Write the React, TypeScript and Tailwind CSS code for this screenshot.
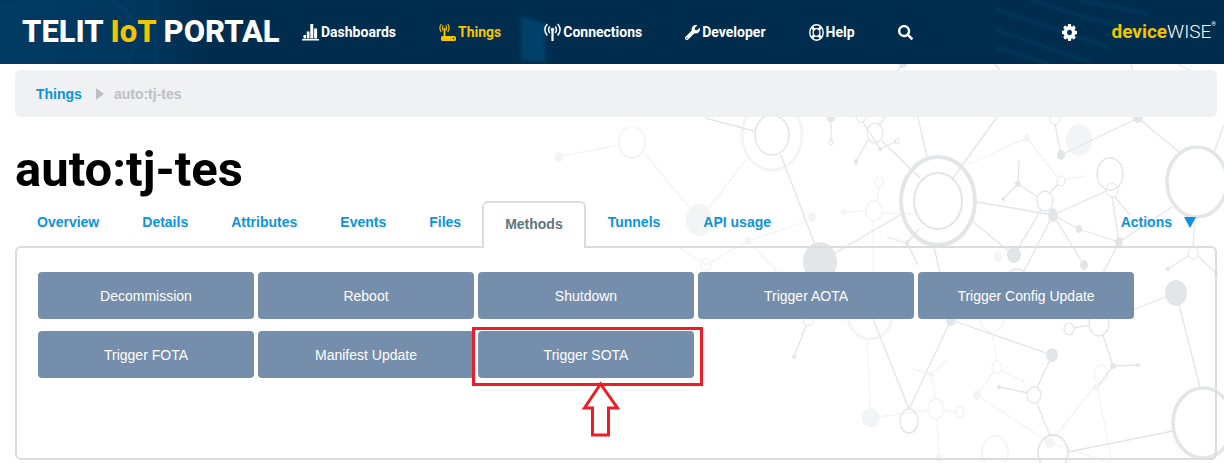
import { FaSearch, FaWrench } from "react-icons/fa";

const INK = "#e3e6e9";
const FAINT = "#f3f4f6";

type Line = [number, number, number, number];
type Node = [number, number, number, number];
type Ring = [number, number, number, number, number];

const faintLines: Line[] = [
  [563, 156, 618, 145], [644, 153, 690, 208], [747, 158, 709, 208], [706, 265, 680, 248],
  [706, 265, 748, 241], [748, 241, 810, 220], [748, 241, 777, 272], [967, 165, 1027, 138],
  [1027, 138, 1057, 177], [1065, 179, 1087, 176], [844, 212, 866, 211], [882, 213, 915, 214],
  [877, 201, 879, 186], [873, 221, 873, 273], [992, 334, 997, 362], [1001, 370, 1023, 381],
  [994, 371, 977, 395], [977, 395, 1050, 443], [867, 340, 871, 418], [871, 418, 928, 410],
  [944, 410, 956, 412], [936, 399, 931, 374], [931, 374, 912, 369], [931, 374, 947, 360],
  [937, 419, 939, 458], [1097, 383, 1055, 437], [1098, 390, 1112, 463], [1050, 443, 1110, 463],
];
const lines: Line[] = [
  [831, 118, 831, 142], [868, 140, 856, 162], [863, 122, 880, 149], [880, 149, 897, 141],
  [882, 141, 920, 178], [879, 125, 888, 113], [917, 113, 927, 157], [1000, 113, 953, 178],
  [1019, 160, 1018, 184], [1018, 184, 1003, 199], [1018, 184, 1038, 197], [1050, 193, 1058, 184],
  [977, 202, 1053, 215], [1053, 215, 1106, 191], [1053, 215, 1079, 229], [1079, 229, 1119, 242],
  [1112, 196, 1119, 242], [1114, 196, 1130, 215], [1053, 215, 1084, 265], [1053, 215, 1023, 273],
  [1041, 210, 1014, 255], [973, 222, 1014, 255], [1119, 242, 1172, 207], [1119, 242, 1103, 273],
  [1179, 152, 1138, 118], [1138, 118, 1061, 155], [1061, 155, 1055, 124], [1214, 152, 1224, 125],
  [1195, 218, 1193, 247], [1188, 256, 1168, 269], [1198, 256, 1216, 273], [820, 262, 900, 215],
  [781, 155, 815, 245], [705, 118, 754, 131], [907, 243, 887, 237], [907, 243, 917, 263],
  [907, 243, 919, 229], [934, 247, 940, 273], [873, 319, 909, 409], [951, 320, 909, 409],
  [951, 320, 1052, 355], [1052, 355, 1037, 388], [1028, 393, 999, 387], [1037, 403, 1050, 436],
  [1068, 452, 1173, 431], [1176, 293, 1200, 387], [1176, 293, 1109, 319], [1089, 325, 1074, 328],
  [1103, 335, 1113, 366], [1113, 366, 1138, 365], [1113, 366, 1098, 386], [806, 326, 794, 357],
  [898, 70, 903, 64], [995, 64, 1000, 71], [1131, 62, 1132, 71], [1178, 64, 1190, 71],
];
const faintDots: Node[] = [
  [559, 157, 4, 5], [699, 220, 13, 16], [748, 241, 3, 4], [1027, 138, 3, 4], [1079, 140, 13, 16],
  [844, 212, 3, 3], [998, 257, 4, 5], [977, 395, 4, 5], [1050, 443, 5, 5], [871, 418, 9, 10],
  [931, 374, 3, 3], [939, 458, 3, 4], [1023, 381, 2, 2], [812, 217, 4, 5],
];
const dots: Node[] = [
  [831, 118, 4, 4], [856, 162, 2, 3], [880, 149, 2, 2], [1018, 184, 3, 3], [1003, 199, 2, 2],
  [1053, 215, 5, 7], [1079, 229, 3, 4], [1119, 242, 4, 5], [1084, 265, 4, 5], [1014, 255, 7, 8],
  [1138, 118, 5, 5], [1061, 155, 4, 5], [1168, 269, 2, 2], [1216, 273, 2, 2], [1176, 293, 11, 13],
  [820, 262, 17, 20], [907, 243, 2, 3], [917, 263, 1, 2], [951, 320, 5, 6], [1052, 355, 6, 7],
  [999, 387, 2, 2], [1113, 366, 3, 3], [1138, 365, 2, 2], [794, 357, 2, 2], [903, 65, 4, 3],
];
const faintRings: Ring[] = [
  [632, 142, 13, 16, 1.5], [772, 135, 30, 35, 3], [706, 265, 5, 6, 1.5], [874, 211, 8, 10, 1.5],
  [879, 182, 4, 5, 1.5], [992, 319, 12, 13, 1.5], [997, 367, 5, 6, 1.5], [936, 409, 8, 10, 1.5],
  [960, 412, 4, 5, 1.5], [995, 452, 13, 16, 1.5], [1101, 374, 7, 9, 1.5], [870, 315, 22, 24, 3],
];
const rings: Ring[] = [
  [772, 135, 17, 20, 1.5], [831, 142, 2, 3, 1], [861, 117, 5, 5, 1], [875, 133, 8, 10, 1.2],
  [897, 141, 2, 3, 1], [938, 201, 37, 44, 4], [938, 201, 24, 28, 2], [1045, 201, 8, 10, 1.3],
  [1061, 181, 4, 5, 1], [1110, 174, 13, 16, 1.5], [1112, 190, 6, 7, 1], [1197, 182, 30, 35, 3.5],
  [1055, 119, 5, 6, 1], [1193, 253, 5, 6, 1], [1017, 282, 11, 13, 1.5], [909, 421, 9, 12, 1.3],
  [1034, 395, 7, 8, 1.3], [1053, 453, 15, 18, 1.8], [1203, 423, 30, 35, 3.5], [1099, 323, 10, 13, 1.3],
  [1069, 329, 5, 6, 1.2], [1096, 388, 2, 2, 1], [808, 321, 5, 5, 1],
];

function Network() {
  const drawLines = (items: Line[], color: string) =>
    items.map(([x1, y1, x2, y2], i) => (
      <line key={i} x1={x1} y1={y1} x2={x2} y2={y2} stroke={color} strokeWidth="1.3" />
    ));
  const drawDots = (items: Node[], color: string) =>
    items.map(([cx, cy, rx, ry], i) => <ellipse key={i} cx={cx} cy={cy} rx={rx} ry={ry} fill={color} />);
  const drawRings = (items: Ring[], color: string) =>
    items.map(([cx, cy, rx, ry, w], i) => (
      <ellipse key={i} cx={cx} cy={cy} rx={rx} ry={ry} fill="none" stroke={color} strokeWidth={w} />
    ));
  return (
    <svg
      aria-hidden="true"
      className="pointer-events-none absolute top-0 right-0 -z-10"
      width="684"
      height="463"
      viewBox="540 0 684 463"
    >
      {drawLines(faintLines, FAINT)}
      {drawRings(faintRings, FAINT)}
      {drawDots(faintDots, FAINT)}
      {drawLines(lines, INK)}
      {drawRings(rings, INK)}
      {drawDots(dots, INK)}
    </svg>
  );
}

function HeaderTexture() {
  return (
    <svg
      aria-hidden="true"
      className="pointer-events-none absolute inset-0 -z-10 h-full w-full"
      viewBox="0 0 1224 64"
      preserveAspectRatio="none"
    >
      <defs>
        <linearGradient id="bar" x1="0" x2="1" y1="0" y2="0">
          <stop offset="0" stopColor="#003a63" />
          <stop offset="0.12" stopColor="#00365c" />
          <stop offset="0.17" stopColor="#002d4e" />
          <stop offset="1" stopColor="#002d4d" />
        </linearGradient>
        <filter id="soft">
          <feGaussianBlur stdDeviation="1.5" />
        </filter>
      </defs>
      <rect width="1224" height="64" fill="url(#bar)" />
      <g filter="url(#soft)">
        <path d="M521 16 L545 23 L545 63 L521 60Z" fill="#003f69" />
        <path d="M0 10 Q10 2 22 8 M110 0 Q150 20 128 62 M156 0V64" stroke="#00406a" strokeWidth="2" fill="none" />
        <path d="M995 9L1110 48M995 29L1090 62M995 47L1050 64M1030 0L1148 36M1080 0L1148 14" stroke="#003a61" strokeWidth="2.5" />
        <path d="M640 5L780 35M620 20L760 55" stroke="#002a46" strokeWidth="3" strokeDasharray="3 3" />
      </g>
    </svg>
  );
}

function BarsIcon() {
  return (
    <svg aria-hidden="true" width="17" height="18" viewBox="0 0 17 18" fill="currentColor">
      <path d="M0 16h17v1.500H0zM1.500 12h2.500v3.500H1.500zM4.800 8.500h2.700v7H4.800zM8.300 1h3v14.500h-3zM12.100 5.500h3v10h-3z" />
    </svg>
  );
}

function RouterIcon() {
  return (
    <svg aria-hidden="true" width="17" height="19" viewBox="0 0 17 19" fill="none" stroke="currentColor">
      <path d="M2.300 1Q-.5 5 2.300 9M4.300 2.500Q2.800 5 4.300 7.500M8.700 1Q11.500 5 8.700 9M6.700 2.500Q8.200 5 6.700 7.500" strokeWidth="1.200" />
      <path d="M5.500 5V14" strokeWidth="1.800" />
      <rect x="2" y="13" width="15" height="5" rx="1.500" fill="currentColor" stroke="none" />
      <circle cx="14.500" cy="15.500" r=".8" fill="#002d4e" stroke="none" />
    </svg>
  );
}

function AntennaIcon() {
  return (
    <svg aria-hidden="true" width="17" height="19" viewBox="0 0 17 19" fill="none" stroke="currentColor">
      <path d="M3.300 1Q-1.500 6.500 3.300 12.500M5.800 3.500Q3.300 6.500 5.800 10M13.700 1Q18.500 6.500 13.700 12.500M11.200 3.500Q13.700 6.500 11.200 10" strokeWidth="1.500" />
      <path d="M8.500 6V18" strokeWidth="2.200" />
      <circle cx="8.500" cy="6.500" r="1.800" fill="currentColor" stroke="none" />
    </svg>
  );
}

function LifeRingIcon() {
  return (
    <svg aria-hidden="true" width="15" height="17" viewBox="0 0 15 17" fill="none" stroke="currentColor">
      <ellipse cx="7.500" cy="8.500" rx="6.700" ry="7.700" strokeWidth="1.400" />
      <ellipse cx="7.500" cy="8.500" rx="3.400" ry="3.900" strokeWidth="1.300" />
      <path d="M3 3.200L5.500 6M12 3.200L9.500 6M3 13.800L5.500 11M12 13.800L9.500 11" strokeWidth="2.800" />
    </svg>
  );
}

function CogIcon() {
  return (
    <svg aria-hidden="true" width="15" height="17" viewBox="0 0 1536 1536" preserveAspectRatio="none" fill="currentColor">
      <path d="M1024 768q0-106-75-181t-181-75-181 75-75 181 75 181 181 75 181-75 75-181zm512-109v222q0 12-8 23t-20 13l-185 28q-19 54-39 91 35 50 107 138 10 12 10 25t-9 23q-27 37-99 108t-94 71q-12 0-26-9l-138-108q-44 23-91 38-16 136-29 186-7 28-36 28h-222q-14 0-24.500-8.500t-11.500-21.500l-28-184q-49-16-90-37l-141 107q-10 9-25 9-14 0-25-11-126-114-165-168-7-10-7-23 0-12 8-23 15-21 51-66.500t54-70.500q-27-50-41-99l-183-27q-13-2-21-12.500t-8-23.500v-222q0-12 8-23t19-13l186-28q14-46 39-92-40-57-107-138-10-12-10-24 0-10 9-23 26-36 98.500-107.500t94.500-71.500q13 0 26 10l138 107q44-23 91-38 16-136 29-186 7-28 36-28h222q14 0 24.500 8.500t11.500 21.500l28 184q49 16 90 37l142-107q9-9 24-9 13 0 25 10 129 119 165 170 7 8 7 22 0 12-8 23-15 21-51 66.500t-54 70.500q26 50 41 98l183 28q13 2 21 12.500t8 23.500z" />
    </svg>
  );
}

const tabClass = "pt-[9px] pr-[21px] pl-[22px] text-sm leading-6 font-bold text-[#0d92e0]";

export default function App() {
  const methods = [
    "Decommission", "Reboot", "Shutdown", "Trigger AOTA",
    "Trigger Config Update", "Trigger FOTA", "Manifest Update", "Trigger SOTA",
  ];
  return (
    <div className="relative isolate overflow-hidden bg-white pb-[3px] font-['Liberation_Sans',sans-serif]">
      <Network />
      <header className="relative isolate flex h-16 items-center pr-2 pl-[22px] font-[Roboto,sans-serif] font-bold text-white">
        <HeaderTexture />
        <a href="#home" className="mr-5 w-[260px] text-[31px] leading-10 font-extrabold whitespace-nowrap">
          TELIT <span className="text-[#f5c400]">IoT</span> PORTAL
        </a>
        <nav className="flex items-center gap-[43px] text-sm">
          <a href="#dashboards" className="flex items-center gap-[2px]"><BarsIcon />Dashboards</a>
          <a href="#things" className="flex items-center gap-[2px] text-[#f5c400]"><RouterIcon />Things</a>
          <a href="#connections" className="flex items-center gap-[2px]"><AntennaIcon />Connections</a>
          <a href="#developer" className="flex items-center gap-[2px]"><FaWrench size={15} />Developer</a>
          <a href="#help" className="flex items-center gap-[2px]"><LifeRingIcon />Help</a>
          <button aria-label="Search"><FaSearch size={15} /></button>
        </nav>
        <button aria-label="Settings" className="mr-[34px] ml-auto"><CogIcon /></button>
        <a href="#devicewise" className="flex text-[19px] leading-6">
          <span className="text-[#f5c400]">device</span>
          <span className="font-light">WISE</span>
          <span className="text-[6px] leading-2 font-normal">®</span>
        </a>
      </header>
      <main className="pr-[7px] pl-[15px]">
        <nav aria-label="Breadcrumb" className="mt-[6px] flex h-[47px] items-center rounded-md bg-[#f0f1f3] px-[21px] text-sm font-bold">
          <a href="#things" className="text-[#0d92e0]">Things</a>
          <svg aria-hidden="true" className="mr-[10px] ml-[14px]" width="8" height="12" viewBox="0 0 8 12" fill="#bcc0c4"><path d="M0 0L8 6L0 12Z" /></svg>
          <span className="text-[#bcc0c4]">auto:tj-tes</span>
        </nav>
        <h1 className="mt-[22px] font-[Roboto] text-[49px] leading-[62px] font-bold text-black">auto:tj-tes</h1>
        <div className="relative z-10 -mb-[2px] flex items-start">
          {["Overview", "Details", "Attributes", "Events", "Files"].map((t) => (
            <a key={t} href="#tab" className={tabClass}>{t}</a>
          ))}
          <a href="#methods" className="h-[47px] rounded-t-md border-2 border-b-0 border-[#dcdcdc] bg-white px-[21px] pt-[9px] text-sm leading-6 font-bold text-[#5f7480]">Methods</a>
          {["Tunnels", "API usage"].map((t) => (
            <a key={t} href="#tab" className={tabClass}>{t}</a>
          ))}
          <button className="mr-[21px] ml-auto flex items-center gap-3 pt-[9px] text-sm leading-6 font-bold text-[#0d92e0]">
            Actions
            <svg aria-hidden="true" width="12" height="11" viewBox="0 0 12 11" fill="currentColor"><path d="M0 0H12L6 11Z" /></svg>
          </button>
        </div>
        <section className="rounded-md border-2 border-[#dcdcdc] px-[21px] pt-6 pb-20">
          <div className="flex flex-wrap gap-x-1 gap-y-3">
            {methods.map((m) => (
              <div key={m} className="relative">
                <button className="h-[47px] w-[216px] rounded bg-[#758eac] text-sm text-white">{m}</button>
                {m === "Trigger SOTA" && (
                  <svg aria-hidden="true" className="pointer-events-none absolute -top-1 -left-[6px]" width="231" height="112" viewBox="0 0 231 112" fill="none" stroke="#ee1c25" strokeWidth="3">
                    <rect x="1.500" y="1.500" width="228" height="56" />
                    <path d="M128.500 57L112.500 81H120.500V108H136.500V81H145.500Z" />
                  </svg>
                )}
              </div>
            ))}
          </div>
        </section>
      </main>
    </div>
  );
}
